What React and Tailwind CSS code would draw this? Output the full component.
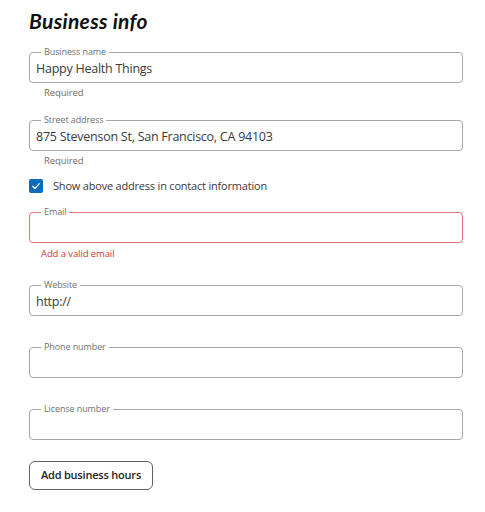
import React, { useState } from "react";

const font = { fontFamily: '"Open Sans", "Noto Sans", sans-serif' };

const Field = ({ label, value, error, className = "" }) => {
  const [val, setVal] = useState(value || "");
  return (
    <fieldset
      className={`w-[434px] rounded-[4px] border px-[6px] pb-[3px] ${
        error ? "border-[#e8707a]" : "border-[#a6a6a6]"
      } ${className}`}
    >
      <legend className="ml-[5px] px-[3px] text-[9px] leading-[12px] tracking-[-0.1px] text-[#707070]">
        {label}
      </legend>
      <input
        value={val}
        onChange={(e) => setVal(e.target.value)}
        className="block h-[21px] w-full bg-transparent text-[12.5px] tracking-[-0.25px] text-[#3b3a39] outline-none"
      />
    </fieldset>
  );
};

const Helper = ({ children, error }) => (
  <p
    className={`text-[9.5px] leading-[12px] tracking-[-0.1px] ${
      error ? "ml-[12px] mt-[5px] text-[#d13438]" : "ml-[15px] mt-[4px] text-[#7a6a58]"
    }`}
  >
    {children}
  </p>
);

export default function App() {
  const [checked, setChecked] = useState(true);

  return (
    <div className="min-h-[512px] bg-white pl-[29px] pt-[9px]" style={font}>
      <h1
        className="text-[21px] leading-[23px] font-bold italic tracking-[0.3px] text-[#111]"
        style={{ fontFamily: "Lato, sans-serif" }}
      >
        Business info
      </h1>

      <Field label="Business name" value="Happy Health Things" className="mt-[14px]" />
      <Helper>Required</Helper>

      <Field
        label="Street address"
        value="875 Stevenson St, San Francisco, CA 94103"
        className="mt-[15px]"
      />
      <Helper>Required</Helper>

      <label className="mt-[12px] flex cursor-pointer items-center gap-[10px]">
        <button
          type="button"
          onClick={() => setChecked(!checked)}
          className={`flex h-[14px] w-[14px] items-center justify-center rounded-[2px] ${
            checked ? "bg-[#0f6cbd]" : "border border-[#605e5c] bg-white"
          }`}
        >
          {checked && (
            <svg viewBox="0 0 12 12" className="h-[10px] w-[10px]">
              <path
                d="M2 6.3 4.8 9 10 3.2"
                fill="none"
                stroke="white"
                strokeWidth="1.4"
                strokeLinecap="round"
                strokeLinejoin="round"
              />
            </svg>
          )}
        </button>
        <span className="text-[11px] leading-[14px] tracking-[-0.2px] text-[#3b3a39]">
          Show above address in contact information
        </span>
      </label>

      <Field label="Email" error className="mt-[13px]" />
      <Helper error>Add a valid email</Helper>

      <Field label="Website" value="http://" className="mt-[19px]" />
      <Field label="Phone number" className="mt-[25px]" />
      <Field label="License number" className="mt-[25px]" />

      <button
        type="button"
        className="mt-[21px] h-[29px] w-[124px] rounded-[6px] border border-[#616161] text-[11px] font-semibold tracking-[-0.2px] text-[#242424]"
      >
        Add business hours
      </button>
    </div>
  );
}
